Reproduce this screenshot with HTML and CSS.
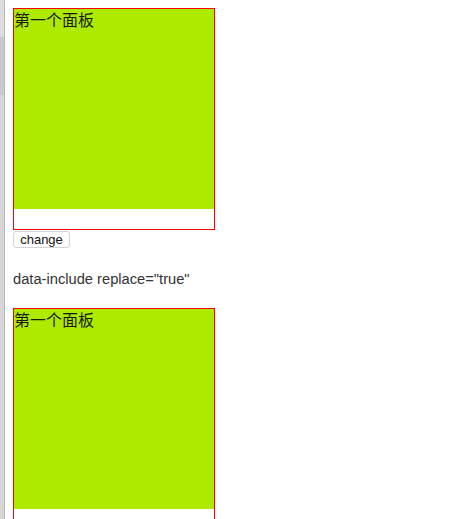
FILE: index.html
```html
<!DOCTYPE html>
<html>
<head>
<meta charset="utf-8">
<link rel="stylesheet" href="styles.css">
</head>
<body>
<div class="page">
  <aside class="rail">
    <div class="rail-top"></div>
    <div class="rail-mid"></div>
    <div class="rail-rest"></div>
  </aside>
  <main class="content">
    <div class="panel">
      <div class="panel-fill">第一个面板</div>
    </div>
    <button class="btn">change</button>
    <p class="note">data-include replace="true"</p>
    <div class="panel">
      <div class="panel-fill">第一个面板</div>
    </div>
  </main>
</div>
</body>
</html>
```

FILE: styles.css
```css
html, body {
  margin: 0;
  padding: 0;
  background: #fff;
}
.page {
  display: flex;
  min-height: 519px;
}
.rail {
  width: 4px;
  flex: none;
  display: flex;
  flex-direction: column;
  border-right: 1px solid #b8b8b8;
  background: #d6d6d6;
}
.rail-top { height: 37px; background: #dcdcdc; }
.rail-mid { height: 58px; background: #c9c9c9; }
.rail-rest { flex: 1; background: #d6d6d6; }
.content {
  padding: 8px 0 0 8px;
  font-family: "Liberation Sans", Arial, sans-serif;
}
.panel {
  width: 200px;
  height: 220px;
  border: 1px solid #ff0000;
}
.panel-fill {
  height: 200px;
  background: #aeea00;
  font-family: "Noto Sans CJK SC", sans-serif;
  font-size: 16px;
  line-height: 18px;
  color: #1a1a1a;
  padding-top: 1px;
  box-sizing: border-box;
}
.btn {
  display: block;
  margin: 1px 0 0 0;
  height: 17px;
  width: 57px;
  padding: 0;
  font-family: "Liberation Sans", Arial, sans-serif;
  font-size: 13px;
  line-height: 15px;
  color: #111;
  background: #fff;
  border: 1px solid #d4d4d4;
  border-radius: 3px;
}
.note {
  margin: 22px 0 20px 0;
  font-size: 14.7px;
  line-height: 18px;
  color: #333;
}
```
